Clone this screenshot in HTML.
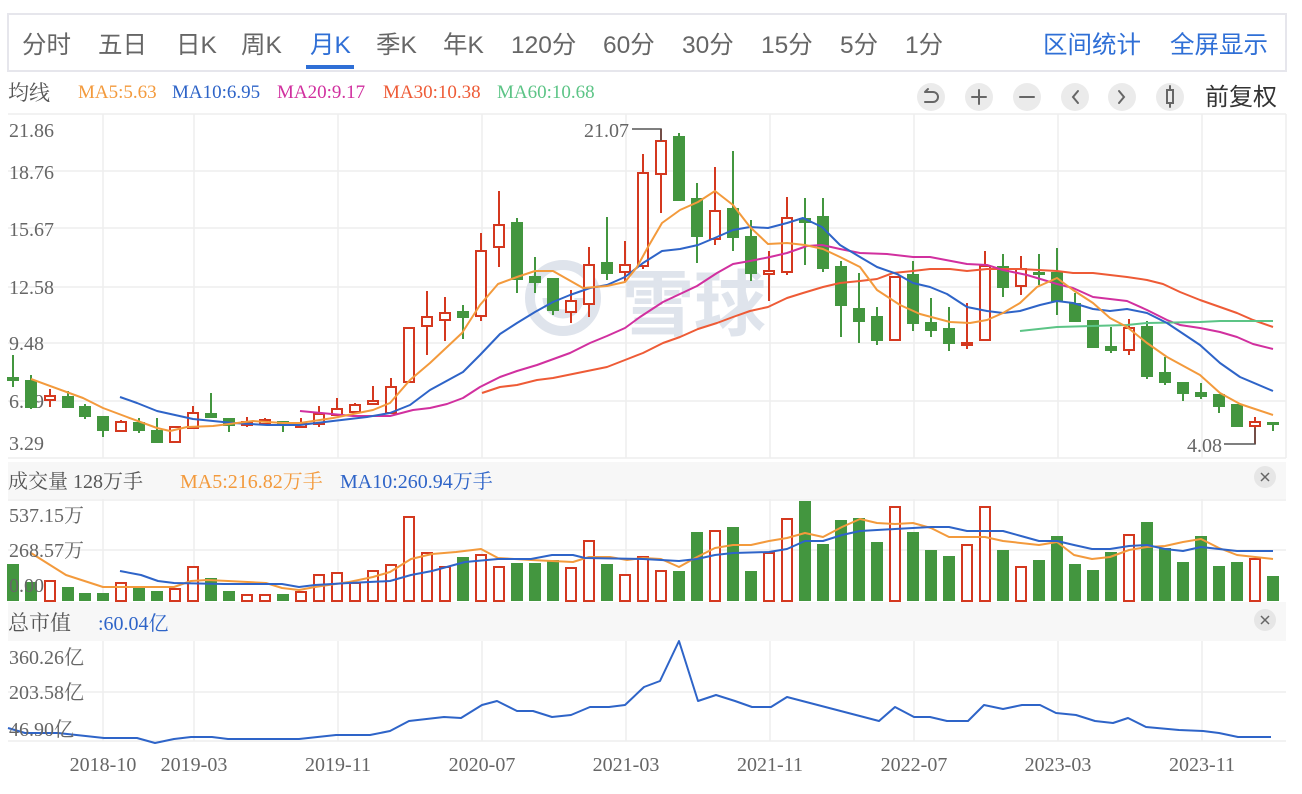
<!DOCTYPE html>
<html><head><meta charset="utf-8"><style>
html,body{margin:0;padding:0;background:#fff;width:1302px;height:794px;overflow:hidden}
svg{display:block}
.tab{font-family:"Liberation Sans","Noto Sans CJK SC",sans-serif;font-size:24.5px;fill:#666}
.ax{font-family:"Liberation Serif","Noto Serif CJK SC",serif;font-size:20px;fill:#666}
.ma{font-family:"Liberation Serif","Noto Serif CJK SC",serif;font-size:19px}
.hd{font-family:"Liberation Serif","Noto Serif CJK SC",serif;font-size:20px;fill:#555}
</style></head><body>
<svg width="1302" height="794" viewBox="0 0 1302 794" xmlns="http://www.w3.org/2000/svg">
<rect x="8" y="14" width="1278" height="57" fill="#fff" stroke="#e6e6ec" stroke-width="2"/>
<g class="tab">
<text x="22" y="53">分时</text><text x="98" y="53">五日</text><text x="176" y="53">日K</text><text x="241" y="53">周K</text>
<text x="310" y="53" style="fill:#2f6fd6">月K</text>
<text x="376" y="53">季K</text><text x="443" y="53">年K</text><text x="511" y="53">120分</text><text x="603" y="53">60分</text>
<text x="682" y="53">30分</text><text x="761" y="53">15分</text><text x="840" y="53">5分</text><text x="905" y="53">1分</text>
<text x="1043" y="53" style="fill:#2f6fd6">区间统计</text><text x="1170" y="53" style="fill:#2f6fd6">全屏显示</text>
</g>
<rect x="306" y="65" width="48" height="4" fill="#2f6fd6"/>
<text x="8" y="100" class="hd" style="font-size:21px">均线</text>
<g class="ma">
<text x="78" y="98" fill="#f39a3c">MA5:5.63</text>
<text x="172" y="98" fill="#2e64c8">MA10:6.95</text>
<text x="277" y="98" fill="#d1309f">MA20:9.17</text>
<text x="383" y="98" fill="#ee5b36">MA30:10.38</text>
<text x="497" y="98" fill="#5cc486">MA60:10.68</text>
</g>
<g fill="#ebebeb"><circle cx="931" cy="97" r="14"/><circle cx="979" cy="97" r="14"/><circle cx="1027" cy="97" r="14"/><circle cx="1075" cy="97" r="14"/><circle cx="1122" cy="97" r="14"/><circle cx="1170" cy="97" r="14"/></g>
<g stroke="#666" stroke-width="2" fill="none" stroke-linecap="round">
<path d="M925 102h8a5 5 0 0 0 0-10h-8m0 0l3-3"/>
<path d="M979 90v14M972 97h14"/>
<path d="M1020 97h14"/>
<path d="M1078 91l-5 6 5 6"/>
<path d="M1119 91l5 6-5 6"/>
<rect x="1167" y="90" width="6" height="13"/><path d="M1170 86v4M1170 103v4"/>
</g>
<text x="1205" y="105" style="font-family:'Liberation Sans','Noto Sans CJK SC',sans-serif;font-size:24px;fill:#333">前复权</text>

<g stroke="#eeeeee" stroke-width="1.5">
<path d="M8 114H1286M8 171H1286M8 228H1286M8 287H1286M8 343H1286M8 401H1286M8 458H1286"/>
<path d="M103 114V458M194 114V458M338 114V458M482 114V458M626 114V458M770 114V458M914 114V458M1058 114V458M1202 114V458"/>
<path d="M103 499V601M194 499V601M338 499V601M482 499V601M626 499V601M770 499V601M914 499V601M1058 499V601M1202 499V601M8 550H1286M8 500H1286"/>
<path d="M103 641V741M194 641V741M338 641V741M482 641V741M626 641V741M770 641V741M914 641V741M1058 641V741M1202 641V741M8 692H1286M8 741H1286"/>
<path d="M1286 114V458"/>
</g>
<circle cx="563" cy="298" r="33" fill="none" stroke="#dfe4ec" stroke-width="10"/>
<path d="M547 298a16 16 0 0 0 32 0" fill="none" stroke="#dfe4ec" stroke-width="9"/>
<text x="622" y="330" style="font-family:'Noto Sans CJK SC',sans-serif;font-size:72px;font-weight:bold;fill:#dfe4ec">雪球</text>

<g class="ax">
<text x="9" y="137">21.86</text><text x="9" y="179">18.76</text><text x="9" y="236">15.67</text><text x="9" y="294">12.58</text>
<text x="9" y="350">9.48</text><text x="9" y="408">6.39</text><text x="9" y="450">3.29</text>
</g>

<g stroke="#43963f" stroke-width="2">
<path d="M13 355V387M31 375V409M68 391V408M85 404V419M103 416V437M139 418V433M157 418V443M211 393V418M229 418V432M283 421V432M463 305V339M517 218V293M535 257V293M553 278V315M607 217V280M679 133V201M697 183V263M733 151V251M751 220V281M805 198V265M823 198V272M841 261V337M859 273V343M877 307V345M913 261V331M931 298V337M949 307V351M1003 254V297M1039 254V285M1057 248V315M1075 293V322M1093 320V348M1111 327V353M1147 321V379M1165 357V385M1183 382V401M1201 383V399M1219 394V413M1237 404V427M1273 422V431"/>
</g>
<g stroke="#d4381f" stroke-width="2">
<path d="M50 389V407M121 420V431M175 427V442M193 406V428M247 417V427M265 418V424M301 418V427M319 406V427M337 398V415M355 403V412M373 386V404M391 378V413M409 327V382M427 291V355M445 297V341M481 233V321M499 191V267M571 290V323M589 247V317M625 241V281M643 154V269M661 129V213M715 167V245M769 251V301M787 197V275M895 277V340M967 303V349M985 251V340M1021 256V295M1129 319V355M1255 417V444"/>
</g>
<g fill="#43963f">
<rect x="7" y="377" width="12" height="4"/><rect x="25" y="380" width="12" height="28"/><rect x="62" y="396" width="12" height="12"/><rect x="79" y="406" width="12" height="11"/><rect x="97" y="416" width="12" height="15"/><rect x="133" y="422" width="12" height="9"/><rect x="151" y="430" width="12" height="13"/><rect x="205" y="413" width="12" height="5"/><rect x="223" y="418" width="12" height="8"/><rect x="277" y="421" width="12" height="5"/><rect x="457" y="311" width="12" height="7"/><rect x="511" y="222" width="12" height="58"/><rect x="529" y="276" width="12" height="7"/><rect x="547" y="278" width="12" height="33"/><rect x="601" y="262" width="12" height="12"/><rect x="673" y="136" width="12" height="65"/><rect x="691" y="198" width="12" height="39"/><rect x="727" y="208" width="12" height="30"/><rect x="745" y="236" width="12" height="38"/><rect x="799" y="218" width="12" height="5"/><rect x="817" y="216" width="12" height="53"/><rect x="835" y="266" width="12" height="40"/><rect x="853" y="308" width="12" height="14"/><rect x="871" y="316" width="12" height="25"/><rect x="907" y="274" width="12" height="50"/><rect x="925" y="322" width="12" height="9"/><rect x="943" y="328" width="12" height="16"/><rect x="997" y="266" width="12" height="22"/><rect x="1033" y="272" width="12" height="3"/><rect x="1051" y="272" width="12" height="30"/><rect x="1069" y="303" width="12" height="19"/><rect x="1087" y="320" width="12" height="28"/><rect x="1105" y="346" width="12" height="5"/><rect x="1141" y="326" width="12" height="51"/><rect x="1159" y="372" width="12" height="11"/><rect x="1177" y="382" width="12" height="12"/><rect x="1195" y="392" width="12" height="5"/><rect x="1213" y="394" width="12" height="13"/><rect x="1231" y="404" width="12" height="23"/><rect x="1267" y="422" width="12" height="3"/>
</g>
<g fill="#fff" stroke="#d4381f" stroke-width="2">
<rect x="45" y="396" width="10" height="4"/><rect x="116" y="422" width="10" height="9"/><rect x="170" y="427" width="10" height="15"/><rect x="188" y="413" width="10" height="15"/><rect x="242" y="422" width="10" height="3"/><rect x="260" y="420" width="10" height="4"/><rect x="296" y="423" width="10" height="4"/><rect x="314" y="414" width="10" height="10"/><rect x="332" y="409" width="10" height="6"/><rect x="350" y="405" width="10" height="7"/><rect x="368" y="401" width="10" height="3"/><rect x="386" y="387" width="10" height="26"/><rect x="404" y="328" width="10" height="54"/><rect x="422" y="317" width="10" height="9"/><rect x="440" y="313" width="10" height="7"/><rect x="476" y="251" width="10" height="65"/><rect x="494" y="225" width="10" height="22"/><rect x="566" y="301" width="10" height="11"/><rect x="584" y="265" width="10" height="39"/><rect x="620" y="265" width="10" height="7"/><rect x="638" y="173" width="10" height="93"/><rect x="656" y="141" width="10" height="33"/><rect x="710" y="211" width="10" height="28"/><rect x="764" y="271" width="10" height="3"/><rect x="782" y="218" width="10" height="54"/><rect x="890" y="277" width="10" height="63"/><rect x="962" y="343" width="10" height="2"/><rect x="980" y="266" width="10" height="74"/><rect x="1016" y="269" width="10" height="17"/><rect x="1124" y="328" width="10" height="22"/><rect x="1250" y="422" width="10" height="4"/>
</g>
<g fill="none" stroke-width="2" stroke-linejoin="round">
<polyline stroke="#ee5b36" points="482,393 500,387 517,385 537,380 553,378 607,367 625,360 643,353 663,343 680,337 698,329 717,323 733,317 750,311 768,307 787,298 803,293 823,287 840,283 860,281 877,279 893,273 913,271 930,269 950,269 967,271 987,269 1020,269 1057,271 1073,273 1093,273 1127,277 1147,280 1163,284 1180,292 1200,300 1220,307 1237,313 1253,320 1273,327"/>
<polyline stroke="#d1309f" points="300,411 353,416 390,416 413,410 430,408 447,404 463,398 480,387 500,377 517,371 537,365 570,353 590,343 607,336 625,328 640,317 663,302 680,294 697,286 717,273 733,264 750,261 770,257 787,253 807,246 822,245 840,249 860,253 887,254 913,257 930,257 967,264 987,265 1003,270 1027,275 1057,284 1073,288 1093,297 1110,299 1127,301 1147,310 1167,320 1180,325 1200,328 1220,332 1237,337 1253,344 1273,349"/>
<polyline stroke="#5cc486" points="1020,331 1057,327 1127,325 1147,323 1200,322 1220,321 1273,321"/>
<polyline stroke="#2e64c8" points="120,397 137,403 157,411 193,419 233,423 267,425 300,425 333,421 367,417 390,413 410,405 430,390 463,372 480,355 500,334 517,323 535,312 553,302 570,295 590,288 607,285 625,277 643,263 662,251 680,249 698,245 717,237 733,230 750,227 768,228 787,223 803,218 822,227 840,245 860,257 877,267 897,274 913,283 930,287 947,294 967,307 987,311 1003,313 1020,311 1040,305 1057,301 1073,303 1093,309 1110,311 1127,309 1147,313 1167,323 1200,345 1220,363 1240,377 1273,391"/>
<polyline stroke="#f39a3c" points="31,379 83,398 103,408 127,417 157,428 170,431 187,427 213,426 253,421 283,423 300,423 333,418 353,414 373,410 390,403 410,380 430,363 462,333 480,305 498,284 517,277 535,271 553,271 583,288 607,286 625,282 637,267 648,247 662,223 680,210 698,202 715,191 733,205 750,227 768,244 787,243 805,245 823,249 840,257 860,267 877,290 900,305 920,314 950,322 970,323 987,320 1003,313 1020,303 1037,287 1057,278 1073,290 1093,303 1110,318 1127,327 1147,343 1167,357 1200,375 1220,393 1240,404 1273,415"/>
</g>
<text x="584" y="137" class="ax">21.07</text>
<path d="M632 129H661V141" fill="none" stroke="#555" stroke-width="1.5"/>
<text x="1187" y="452" class="ax">4.08</text>
<path d="M1224 444H1255V428" fill="none" stroke="#555" stroke-width="1.5"/>

<rect x="8" y="462" width="1278" height="37" fill="#f7f7f7"/>
<text x="8" y="488" class="hd">成交量 128万手</text>
<text x="180" y="488" class="ma" style="font-size:20px" fill="#f39a3c">MA5:216.82万手</text>
<text x="340" y="488" class="ma" style="font-size:20px" fill="#2e64c8">MA10:260.94万手</text>
<circle cx="1265" cy="477" r="11" fill="#e6e6e6"/>
<path d="M1261 473l8 8M1269 473l-8 8" stroke="#666" stroke-width="1.5"/>
<g fill="#43963f">
<rect x="7" y="564" width="12" height="37"/><rect x="25" y="582" width="12" height="19"/><rect x="62" y="587" width="12" height="14"/><rect x="79" y="593" width="12" height="8"/><rect x="97" y="593" width="12" height="8"/><rect x="133" y="587" width="12" height="14"/><rect x="151" y="591" width="12" height="10"/><rect x="205" y="578" width="12" height="23"/><rect x="223" y="591" width="12" height="10"/><rect x="277" y="594" width="12" height="7"/><rect x="457" y="557" width="12" height="44"/><rect x="511" y="563" width="12" height="38"/><rect x="529" y="563" width="12" height="38"/><rect x="547" y="560" width="12" height="41"/><rect x="601" y="564" width="12" height="37"/><rect x="673" y="571" width="12" height="30"/><rect x="691" y="532" width="12" height="69"/><rect x="727" y="527" width="12" height="74"/><rect x="745" y="571" width="12" height="30"/><rect x="799" y="501" width="12" height="100"/><rect x="817" y="544" width="12" height="57"/><rect x="835" y="520" width="12" height="81"/><rect x="853" y="518" width="12" height="83"/><rect x="871" y="542" width="12" height="59"/><rect x="907" y="532" width="12" height="69"/><rect x="925" y="550" width="12" height="51"/><rect x="943" y="556" width="12" height="45"/><rect x="997" y="550" width="12" height="51"/><rect x="1033" y="560" width="12" height="41"/><rect x="1051" y="536" width="12" height="65"/><rect x="1069" y="564" width="12" height="37"/><rect x="1087" y="570" width="12" height="31"/><rect x="1105" y="552" width="12" height="49"/><rect x="1141" y="522" width="12" height="79"/><rect x="1159" y="548" width="12" height="53"/><rect x="1177" y="562" width="12" height="39"/><rect x="1195" y="536" width="12" height="65"/><rect x="1213" y="566" width="12" height="35"/><rect x="1231" y="562" width="12" height="39"/><rect x="1267" y="576" width="12" height="25"/>
</g>
<g fill="#fff" stroke="#d4381f" stroke-width="2">
<rect x="45" y="581" width="10" height="20"/><rect x="116" y="583" width="10" height="18"/><rect x="170" y="589" width="10" height="12"/><rect x="188" y="567" width="10" height="34"/><rect x="242" y="595" width="10" height="6"/><rect x="260" y="595" width="10" height="6"/><rect x="296" y="592" width="10" height="9"/><rect x="314" y="575" width="10" height="26"/><rect x="332" y="573" width="10" height="28"/><rect x="350" y="583" width="10" height="18"/><rect x="368" y="571" width="10" height="30"/><rect x="386" y="565" width="10" height="36"/><rect x="404" y="517" width="10" height="84"/><rect x="422" y="553" width="10" height="48"/><rect x="440" y="567" width="10" height="34"/><rect x="476" y="555" width="10" height="46"/><rect x="494" y="567" width="10" height="34"/><rect x="566" y="568" width="10" height="33"/><rect x="584" y="541" width="10" height="60"/><rect x="620" y="575" width="10" height="26"/><rect x="638" y="557" width="10" height="44"/><rect x="656" y="571" width="10" height="30"/><rect x="710" y="531" width="10" height="70"/><rect x="764" y="553" width="10" height="48"/><rect x="782" y="519" width="10" height="82"/><rect x="890" y="507" width="10" height="94"/><rect x="962" y="545" width="10" height="56"/><rect x="980" y="507" width="10" height="94"/><rect x="1016" y="567" width="10" height="34"/><rect x="1124" y="535" width="10" height="66"/><rect x="1250" y="559" width="10" height="42"/>
</g>
<g fill="none" stroke-width="2" stroke-linejoin="round">
<polyline stroke="#f39a3c" points="31,553 66,575 103,587 174,587 191,581 207,580 228,581 266,583 282,588 299,590 315,587 349,582 373,577 390,572 411,559 432,554 456,552 481,549 498,558 531,560 573,562 589,557 610,557 627,560 643,558 661,559 679,567 697,557 715,548 733,545 751,545 769,541 787,538 805,533 823,537 842,527 860,519 877,523 895,524 913,523 931,528 949,537 985,537 1003,541 1039,545 1057,542 1074,555 1092,559 1110,557 1129,550 1147,547 1165,546 1183,542 1201,539 1219,548 1237,555 1273,559"/>
<polyline stroke="#2e64c8" points="120,571 141,575 158,581 174,583 224,584 282,584 299,587 315,585 349,583 390,581 411,575 432,571 465,562 498,559 531,559 552,555 573,555 585,558 643,559 679,561 697,559 715,555 733,553 769,552 787,549 805,541 823,541 842,535 860,531 895,529 931,527 949,527 967,531 1003,531 1021,536 1039,541 1057,541 1074,545 1092,549 1110,549 1129,546 1147,545 1165,549 1183,551 1201,547 1219,549 1237,551 1273,551"/>
</g>
<g class="ax"><text x="9" y="522">537.15万</text><text x="9" y="557">268.57万</text><text x="9" y="592">0.00</text></g>

<rect x="8" y="602" width="1278" height="39" fill="#f7f7f7"/>
<text x="8" y="630" class="hd" style="font-size:21px">总市值</text>
<text x="98" y="630" class="ma" style="font-size:20px" fill="#2e64c8">:60.04亿</text>
<circle cx="1265" cy="620" r="11" fill="#e6e6e6"/>
<path d="M1261 616l8 8M1269 616l-8 8" stroke="#666" stroke-width="1.5"/>
<polyline fill="none" stroke="#2e64c8" stroke-width="2" stroke-linejoin="round" points="8,728 25,733 58,733 104,738 137,738 155,743 174,739 191,737 212,737 228,739 299,739 336,735 370,735 390,731 409,721 444,717 461,718 482,705 497,701 517,711 533,711 552,717 571,715 590,707 609,707 625,705 644,687 660,681 679,641 698,701 716,695 735,701 752,707 771,707 787,697 879,721 895,707 914,717 930,717 947,721 968,721 984,705 1003,709 1022,705 1040,705 1056,713 1076,715 1095,721 1113,723 1128,718 1146,727 1179,730 1203,731 1219,733 1238,737 1271,737"/>
<g class="ax"><text x="9" y="664">360.26亿</text><text x="9" y="699">203.58亿</text><text x="9" y="736">46.90亿</text></g>
<g class="ax">
<text x="103" y="771" text-anchor="middle">2018-10</text><text x="194" y="771" text-anchor="middle">2019-03</text><text x="338" y="771" text-anchor="middle">2019-11</text><text x="482" y="771" text-anchor="middle">2020-07</text><text x="626" y="771" text-anchor="middle">2021-03</text><text x="770" y="771" text-anchor="middle">2021-11</text><text x="914" y="771" text-anchor="middle">2022-07</text><text x="1058" y="771" text-anchor="middle">2023-03</text><text x="1202" y="771" text-anchor="middle">2023-11</text>
</g>
</svg>
</body></html>
